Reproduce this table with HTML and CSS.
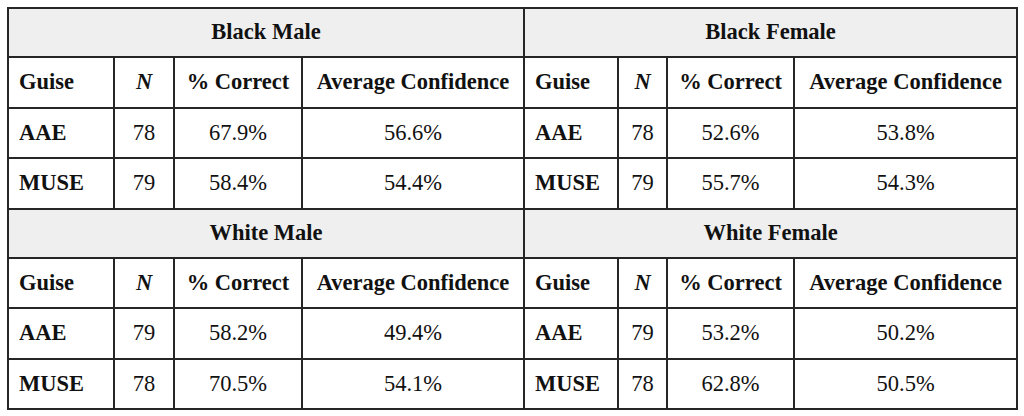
FILE: index.html
```html
<!DOCTYPE html>
<html>
<head>
<meta charset="utf-8">
<link rel="stylesheet" href="styles.css">
</head>
<body>
<table class="results">
  <colgroup>
    <col class="c-guise-l"><col class="c-n-l"><col class="c-pct-l"><col class="c-avg-l">
    <col class="c-guise-r"><col class="c-n-r"><col class="c-pct-r"><col class="c-avg-r">
  </colgroup>
  <tbody>
    <tr class="group">
      <th colspan="4">Black Male</th>
      <th colspan="4">Black Female</th>
    </tr>
    <tr class="heads">
      <th class="left">Guise</th><th><i>N</i></th><th>% Correct</th><th>Average Confidence</th>
      <th class="left">Guise</th><th><i>N</i></th><th>% Correct</th><th>Average Confidence</th>
    </tr>
    <tr>
      <th class="left">AAE</th><td>78</td><td>67.9%</td><td>56.6%</td>
      <th class="left">AAE</th><td>78</td><td>52.6%</td><td>53.8%</td>
    </tr>
    <tr>
      <th class="left">MUSE</th><td>79</td><td>58.4%</td><td>54.4%</td>
      <th class="left">MUSE</th><td>79</td><td>55.7%</td><td>54.3%</td>
    </tr>
    <tr class="group">
      <th colspan="4">White Male</th>
      <th colspan="4">White Female</th>
    </tr>
    <tr class="heads">
      <th class="left">Guise</th><th><i>N</i></th><th>% Correct</th><th>Average Confidence</th>
      <th class="left">Guise</th><th><i>N</i></th><th>% Correct</th><th>Average Confidence</th>
    </tr>
    <tr>
      <th class="left">AAE</th><td>79</td><td>58.2%</td><td>49.4%</td>
      <th class="left">AAE</th><td>79</td><td>53.2%</td><td>50.2%</td>
    </tr>
    <tr>
      <th class="left">MUSE</th><td>78</td><td>70.5%</td><td>54.1%</td>
      <th class="left">MUSE</th><td>78</td><td>62.8%</td><td>50.5%</td>
    </tr>
  </tbody>
</table>
</body>
</html>
```

FILE: styles.css
```css
html, body {
  margin: 0;
  padding: 0;
  background: #ffffff;
}

body {
  padding: 7px 0 0 7px;
  font-family: "Liberation Serif", "Times New Roman", Times, serif;
  color: #111111;
}

.results {
  border-collapse: collapse;
  table-layout: fixed;
  width: 1009px;
  font-size: 22.5px;
}

.c-guise-l { width: 106px; }
.c-n-l { width: 60px; }
.c-pct-l { width: 128px; }
.c-avg-l { width: 222px; }
.c-guise-r { width: 94px; }
.c-n-r { width: 49px; }
.c-pct-r { width: 127px; }
.c-avg-r { width: 223px; }

.results th,
.results td {
  border: 2px solid #262626;
  height: 48.5px;
  padding: 0 6px;
  text-align: center;
  vertical-align: middle;
  white-space: nowrap;
  line-height: 1;
}

.results th {
  font-weight: bold;
}

.results td {
  font-weight: normal;
}

.results th.left {
  text-align: left;
  padding-left: 10px;
}

.results tr.group th {
  background: #efefef;
  height: 47px;
}
```
